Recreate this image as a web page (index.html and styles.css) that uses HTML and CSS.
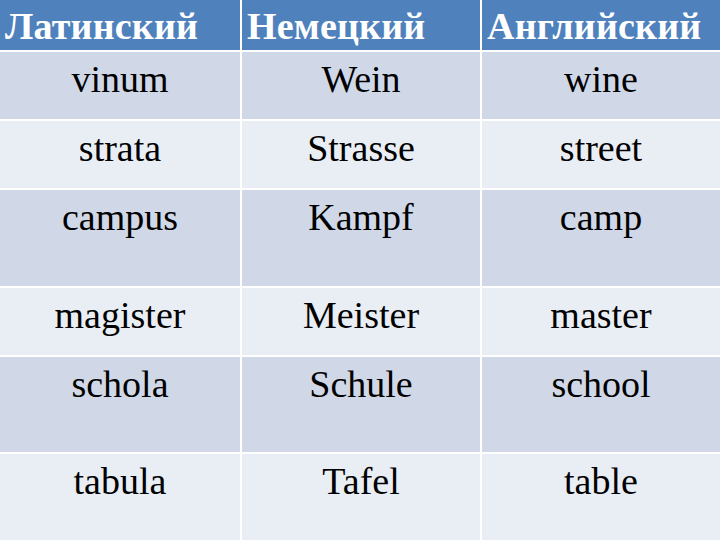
FILE: index.html
```html
<!DOCTYPE html>
<html lang="ru">
<head>
<meta charset="utf-8">
<title>Слова</title>
<link rel="stylesheet" href="styles.css">
</head>
<body>
<div class="table">
  <div class="cell head">Латинский</div>
  <div class="cell head">Немецкий</div>
  <div class="cell head">Английский</div>

  <div class="cell dark">vinum</div>
  <div class="cell dark">Wein</div>
  <div class="cell dark">wine</div>

  <div class="cell light">strata</div>
  <div class="cell light">Strasse</div>
  <div class="cell light">street</div>

  <div class="cell dark">campus</div>
  <div class="cell dark">Kampf</div>
  <div class="cell dark">camp</div>

  <div class="cell light">magister</div>
  <div class="cell light">Meister</div>
  <div class="cell light">master</div>

  <div class="cell dark">schola</div>
  <div class="cell dark">Schule</div>
  <div class="cell dark">school</div>

  <div class="cell light">tabula</div>
  <div class="cell light">Tafel</div>
  <div class="cell light">table</div>
</div>
</body>
</html>
```
FILE: styles.css
```css
html, body {
  margin: 0;
  padding: 0;
  background: #ffffff;
}
.table {
  width: 720px;
  height: 540px;
  display: grid;
  grid-template-columns: 240px 238px 238px;
  grid-template-rows: 50px 67px 67px 96px 67px 95px 1fr;
  gap: 2px;
  font-family: "Liberation Serif", "Times New Roman", serif;
  color: #000000;
}
.cell {
  font-size: 38px;
  line-height: 44px;
  padding-top: 5px;
  text-align: center;
  white-space: nowrap;
}
.head {
  background: #4f81bd;
  color: #ffffff;
  font-weight: bold;
  text-align: left;
  padding: 4px 0 0 5px;
  font-size: 38px;
  letter-spacing: 0.2px;
}
.dark {
  background: #d0d8e8;
}
.light {
  background: #e9edf4;
}
```
